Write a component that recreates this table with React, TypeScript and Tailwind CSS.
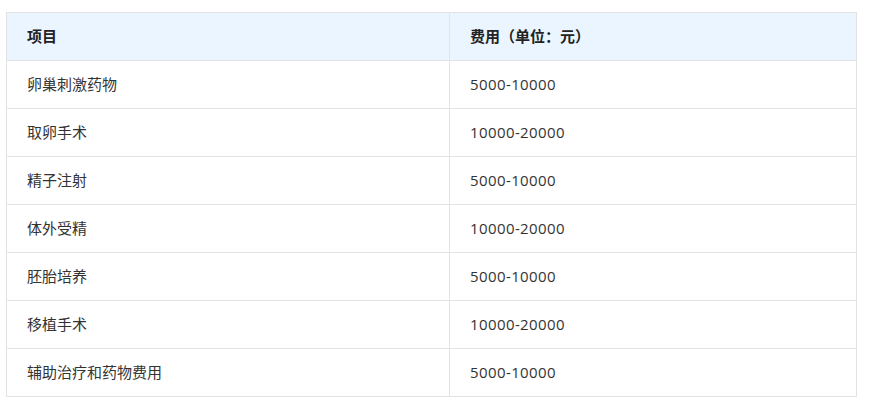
import React from "react";

const rows: [string, string][] = [
  ["卵巢刺激药物", "5000-10000"],
  ["取卵手术", "10000-20000"],
  ["精子注射", "5000-10000"],
  ["体外受精", "10000-20000"],
  ["胚胎培养", "5000-10000"],
  ["移植手术", "10000-20000"],
  ["辅助治疗和药物费用", "5000-10000"],
];

export default function App() {
  return (
    <div
      className="bg-white w-[869px] h-[403px] pt-[12px] pl-[6px]"
      style={{ fontFamily: '"Open Sans", "Noto Sans CJK SC", sans-serif' }}
    >
      <table className="w-[850px] border-collapse table-fixed text-[15px] text-[#333333]">
        <colgroup>
          <col className="w-[443px]" />
          <col className="w-[407px]" />
        </colgroup>
        <thead>
          <tr className="bg-[#ebf5ff] h-[48px]">
            <th className="border border-[#e3e3e3] text-left font-bold pl-[20px] text-[#222]">项目</th>
            <th className="border border-[#e3e3e3] text-left font-bold pl-[20px] text-[#222]">费用（单位：元）</th>
          </tr>
        </thead>
        <tbody>
          {rows.map(([a, b]) => (
            <tr key={a} className="h-[48px]">
              <td className="border border-[#e3e3e3] pl-[20px]">{a}</td>
              <td className="border border-[#e3e3e3] pl-[20px] tracking-[0.4px]">{b}</td>
            </tr>
          ))}
        </tbody>
      </table>
    </div>
  );
}
